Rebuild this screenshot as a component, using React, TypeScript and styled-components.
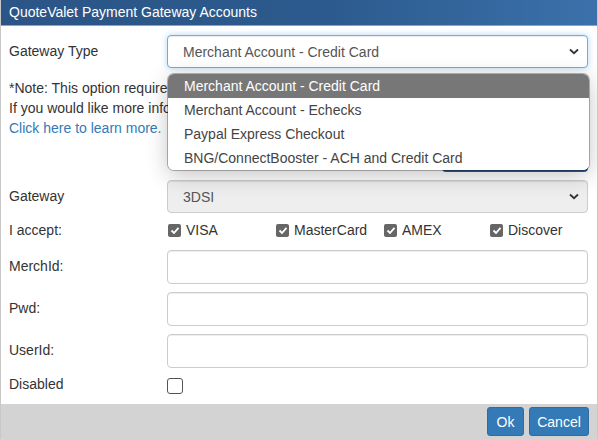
import React from "react";
import styled, { createGlobalStyle } from "styled-components";

const Global = createGlobalStyle`
  html, body { margin: 0; padding: 0; background: #fff; }
  body { font-family: "Liberation Sans", Arial, sans-serif; font-size: 14px; color: #333; }
  * { box-sizing: border-box; }
`;

const Dialog = styled.div`
  width: 598px;
  height: 439px;
  display: flex;
  flex-direction: column;
  border-left: 1px solid #c8c8c8;
  border-right: 1px solid #c8c8c8;
  position: relative;
  overflow: hidden;
`;

const TitleBar = styled.div`
  height: 26px;
  flex: none;
  background: linear-gradient(to right, #2b5586 0%, #2c5a8e 55%, #3b71aa 100%);
  border-bottom: 1px solid #a0a0a0;
  color: #fff;
  font-size: 14px;
  line-height: 25px;
  padding-left: 8px;
`;

const Body = styled.div`
  flex: 1;
  padding: 9px 9px 0 8px;
  position: relative;
`;

const Row = styled.div<{ $mb?: number; $h?: number }>`
  display: grid;
  grid-template-columns: 158px 1fr;
  align-items: center;
  height: ${(p) => p.$h ?? 33}px;
  margin-bottom: ${(p) => p.$mb ?? 9}px;
`;

const Label = styled.div<{ $dy?: number }>`
  color: #333;
  font-size: 14px;
  position: relative;
  top: ${(p) => p.$dy ?? 0}px;
`;

const SelectBox = styled.div<{ $focus?: boolean; $disabled?: boolean }>`
  height: 33px;
  border: 1px solid ${(p) => (p.$focus ? "#66afe9" : "#ccc")};
  border-radius: 4px;
  background: ${(p) => (p.$disabled ? "#eee" : "#fff")};
  box-shadow: ${(p) =>
    p.$focus
      ? "inset 0 1px 1px rgba(0,0,0,.075), 0 0 6px rgba(102,175,233,.5)"
      : "inset 0 1px 1px rgba(0,0,0,.075)"};
  display: flex;
  align-items: center;
  justify-content: space-between;
  padding: 0 8px 0 15px;
  color: #555;
  font-size: 14px;
`;

const Input = styled.div`
  height: 34px;
  border: 1px solid #ccc;
  border-radius: 4px;
  background: #fff;
  box-shadow: inset 0 1px 1px rgba(0,0,0,.075);
`;

const Note = styled.div`
  margin-top: 10px;
  line-height: 20px;
  color: #333;
  font-size: 14px;
  width: 159px;
  overflow: hidden;
  white-space: nowrap;
`;

const Link = styled.a`
  color: #337ab7;
  text-decoration: none;
`;

const HiddenBtnRow = styled.div`
  display: flex;
  justify-content: flex-end;
  align-items: flex-end;
  height: 33px;
  margin-bottom: 9px;
`;

const HiddenBtn = styled.div`
  width: 146px;
  height: 33px;
  margin-bottom: -1px;
  background: #2e5b8f;
  border-radius: 4px;
`;

const AcceptRow = styled.div`
  display: grid;
  grid-template-columns: 158px 1fr;
  align-items: center;
  height: 20px;
  margin-top: -2px;
  margin-bottom: 10px;
`;

const CardList = styled.div`
  display: flex;
  align-items: center;
  padding-left: 1px;
`;

const CardOption = styled.label<{ $w: number }>`
  width: ${(p) => p.$w}px;
  display: flex;
  align-items: center;
  gap: 5px;
  color: #333;
  font-size: 14px;
`;

const Check = styled.span`
  width: 13px;
  height: 13px;
  border-radius: 2px;
  background: #666;
  display: inline-flex;
  align-items: center;
  justify-content: center;
`;

const EmptyBox = styled.span`
  width: 16px;
  height: 16px;
  border: 1px solid #555;
  border-radius: 3px;
  background: #fff;
  display: block;
`;

const Footer = styled.div`
  height: 35px;
  flex: none;
  background: #d3d3d3;
  display: flex;
  justify-content: flex-end;
  align-items: center;
  gap: 5px;
  padding-right: 8px;
`;

const Button = styled.button<{ $w: number }>`
  width: ${(p) => p.$w}px;
  height: 29px;
  background: #337ab7;
  border: 1px solid #2e6da4;
  border-radius: 3px;
  color: #fff;
  font-family: "Liberation Sans", Arial, sans-serif;
  font-size: 14px;
  padding: 0;
`;

const Dropdown = styled.div`
  position: absolute;
  left: 167px;
  top: 74px;
  width: 421px;
  background: #fff;
  border-radius: 6px;
  overflow: hidden;
  box-shadow: 0 0 0 1px rgba(0, 0, 0, 0.28), 0 5px 22px rgba(0, 0, 0, 0.24);
  z-index: 5;
`;

const Option = styled.div<{ $active?: boolean }>`
  height: 24px;
  line-height: 24px;
  padding-left: 16px;
  font-size: 14px;
  background: ${(p) => (p.$active ? "#777" : "#fff")};
  color: ${(p) => (p.$active ? "#fff" : "#444")};
`;

const Chevron = () => (
  <svg width="10" height="7" viewBox="0 0 10 7">
    <path d="M1 1.5 L5 5.2 L9 1.5" fill="none" stroke="#333" strokeWidth="1.8" />
  </svg>
);

const Tick = () => (
  <svg width="10" height="9" viewBox="0 0 10 9">
    <path d="M1.5 4.5 L4 7 L8.5 1.8" fill="none" stroke="#fff" strokeWidth="1.8" />
  </svg>
);

const cards = [
  { name: "VISA", w: 108 },
  { name: "MasterCard", w: 108 },
  { name: "AMEX", w: 106 },
  { name: "Discover", w: 100 },
];

const options = [
  "Merchant Account - Credit Card",
  "Merchant Account - Echecks",
  "Paypal Express Checkout",
  "BNG/ConnectBooster - ACH and Credit Card",
];

export default function App() {
  return (
    <>
      <Global />
      <Dialog>
        <TitleBar>QuoteValet Payment Gateway Accounts</TitleBar>
        <Body>
          <Row $mb={0}>
            <Label $dy={-1}>Gateway Type</Label>
            <SelectBox $focus>
              <span>Merchant Account - Credit Card</span>
              <Chevron />
            </SelectBox>
          </Row>
          <Note>
            *Note: This option requires a merchant account.
            <br />
            If you would like more information
            <br />
            <Link href="#">Click here to learn more.</Link>
          </Note>
          <HiddenBtnRow>
            <HiddenBtn />
          </HiddenBtnRow>
          <Row>
            <Label $dy={-1}>Gateway</Label>
            <SelectBox $disabled>
              <span>3DSI</span>
              <Chevron />
            </SelectBox>
          </Row>
          <AcceptRow>
            <Label>I accept:</Label>
            <CardList>
              {cards.map((c) => (
                <CardOption key={c.name} $w={c.w}>
                  <Check>
                    <Tick />
                  </Check>
                  {c.name}
                </CardOption>
              ))}
            </CardList>
          </AcceptRow>
          <Row $h={34} $mb={8}>
            <Label $dy={-1}>MerchId:</Label>
            <Input />
          </Row>
          <Row $h={34} $mb={8}>
            <Label $dy={-1}>Pwd:</Label>
            <Input />
          </Row>
          <Row $h={34} $mb={8}>
            <Label $dy={-1}>UserId:</Label>
            <Input />
          </Row>
          <Row $h={20} $mb={0}>
            <Label $dy={-2}>Disabled</Label>
            <div>
              <EmptyBox />
            </div>
          </Row>
        </Body>
        <Footer>
          <Button $w={37}>Ok</Button>
          <Button $w={60}>Cancel</Button>
        </Footer>
        <Dropdown>
          {options.map((o, i) => (
            <Option key={o} $active={i === 0}>
              {o}
            </Option>
          ))}
        </Dropdown>
      </Dialog>
    </>
  );
}
